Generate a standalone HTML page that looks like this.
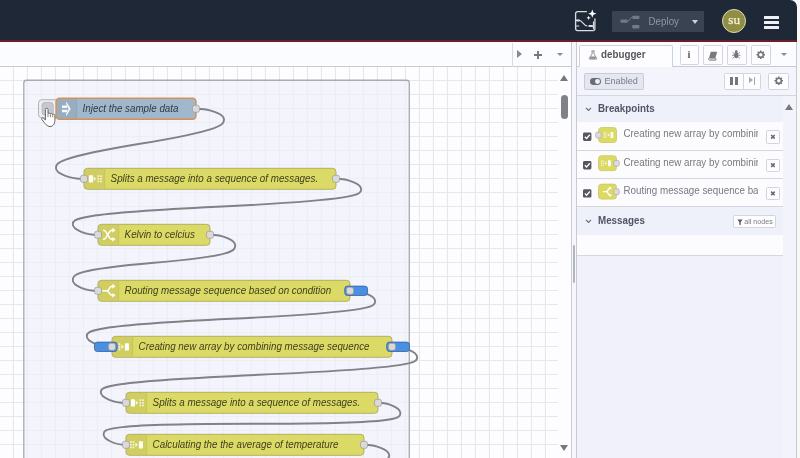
<!DOCTYPE html>
<html lang="en">
<head>
<meta charset="utf-8">
<title>Node-RED debugger</title>
<style>
*{box-sizing:border-box;margin:0;padding:0}
html,body{width:800px;height:458px;overflow:hidden;background:#f8f8f8;font-family:"Liberation Sans",sans-serif;}
#app{will-change:transform;position:absolute;left:0;top:0;width:796.5px;height:458px;overflow:hidden;border-top-right-radius:7px;background:#fbfcff}
.a{position:absolute}
#hdr{left:0;top:0;width:797px;height:42px;background:#1f2836;border-bottom:2px solid #6e1c28}
#tabs{left:0;top:42px;width:571px;height:25px;background:#fbfcff;border-bottom:1px solid #c9cbd3}
#ws{left:0;top:67px;width:571px;height:391px;background:#fff;overflow:hidden}
#ws svg{position:absolute;left:0;top:0}
.nl{font-family:"Liberation Sans",sans-serif;font-style:italic;font-size:14px}
#sep{left:571px;top:42px;width:6px;height:416px;background:#f6f7fc;border-left:1px solid #c9cbd3;border-right:1px solid #c9cbd3}
#sb{left:577px;top:42px;width:219.5px;height:416px;background:#f0f1fa;border-right:1px solid #c9cbd3}
.btn{position:absolute;background:#fdfdff;border:1px solid #d3d5dd;border-radius:1.5px}
.row{position:absolute;left:577px;width:206px;background:#fcfcff;border-bottom:1px solid #d5d7e0}
.t{position:absolute;left:623.5px;width:134.5px;white-space:nowrap;overflow:hidden;font-size:9.8px;color:#77797f;line-height:14px;transform:scaleY(1.09);transform-origin:0 75%}
.sec{position:absolute;left:577px;width:206px;background:#eef0fa}
.st{position:absolute;left:598px;font-weight:bold;font-size:9.8px;color:#4f5563;line-height:14px;transform:scaleY(1.09);transform-origin:0 75%}
</style>
</head>
<body>
<div id="app">
  <div id="hdr" class="a"></div>
  <!-- assistant icon -->
  <svg class="a" style="left:573px;top:7px" width="28" height="28" viewBox="0 0 28 28">
    <path d="M13.5 4.6H4.6a2 2 0 0 0-2 2v15a2 2 0 0 0 2 2h15.300a2 2 0 0 0 2-2v-9.600" fill="none" stroke="#d9dce3" stroke-width="1.300" stroke-linecap="round"/>
    <path d="M3 13.300h3.200c3.300 0 4 5.600 8 5.600M3 19h3.200" fill="none" stroke="#d9dce3" stroke-width="1.200"/>
    <rect x="3.200" y="12.400" width="3.600" height="2" rx=".6" fill="#d9dce3"/>
    <rect x="15.500" y="18" width="4.500" height="2" rx=".6" fill="#d9dce3"/>
    <path d="M20.500 14.500v7.500" stroke="#d9dce3" stroke-width="1.200"/>
    <path d="M19.300 2.600l1.100 3 3 1.100-3 1.100-1.100 3-1.100-3-3-1.100 3-1.100z" fill="#fff"/>
    <path d="M15.600 8.700l.6 1.500 1.500.6-1.500.6-.6 1.500-.6-1.500-1.500-.6 1.500-.6z" fill="#fff"/>
  </svg>
  <!-- deploy -->
  <div class="a" style="left:612px;top:11px;width:92px;height:21px;background:#3a4352;border-radius:1px"></div>
  <svg class="a" style="left:619px;top:13px" width="24" height="17" viewBox="0 0 24 17">
    <rect x="1.500" y="6.400" width="7.200" height="3.400" rx=".8" fill="#737a87"/>
    <rect x="13.200" y="2.700" width="7.200" height="3.400" rx=".8" fill="#737a87"/>
    <rect x="13.200" y="12" width="7.200" height="3.400" rx=".8" fill="#737a87"/>
    <path d="M8.700 8.100c2.500 0 2-3.700 4.500-3.700" stroke="#737a87" stroke-width="1" fill="none"/>
  </svg>
  <div class="a" style="left:648.5px;top:14.700px;font-size:9.8px;line-height:14px;color:#9096a1;transform:scaleY(1.08);transform-origin:0 75%">Deploy</div>
  <div class="a" style="left:692px;top:19.500px;width:0;height:0;border-left:3.300px solid transparent;border-right:3.300px solid transparent;border-top:4px solid #d0d3da"></div>
  <!-- user -->
  <div class="a" style="left:722.2px;top:9px;width:24px;height:24px;border-radius:50%;background:#908d45;border:1.500px solid #dedcb0;color:#fff;font-family:'Liberation Serif',serif;font-size:13.2px;line-height:19.5px;text-align:center;-webkit-text-stroke:.25px #f6f4d6;color:#f6f4d6">su</div>
  <!-- menu -->
  <div class="a" style="left:763.7px;top:15.7px;width:15.800px;height:3.100px;background:#eef0f5;border-radius:.5px"></div>
  <div class="a" style="left:763.7px;top:21px;width:15.800px;height:3.100px;background:#eef0f5;border-radius:.5px"></div>
  <div class="a" style="left:763.7px;top:26.200px;width:15.800px;height:3.100px;background:#eef0f5;border-radius:.5px"></div>

  <div id="tabs" class="a"></div>
  <div class="a" style="left:512px;top:43px;width:1px;height:24px;background:#d9dbe2"></div>
  <div class="a" style="left:516.500px;top:50px;width:0;height:0;border-top:4.200px solid transparent;border-bottom:4.200px solid transparent;border-left:5px solid #888a90"></div>
  <svg class="a" style="left:532.500px;top:49.500px" width="10" height="10" viewBox="0 0 10 10"><path d="M5 1v8M1 5h8" stroke="#777" stroke-width="1.900"/></svg>
  <div class="a" style="left:556.500px;top:53.200px;width:0;height:0;border-left:3.200px solid transparent;border-right:3.200px solid transparent;border-top:3.600px solid #888a90"></div>

  <div id="ws" class="a">
    <svg width="571" height="391" viewBox="0 0 571 391">
      <defs>
        <pattern id="grid" width="14" height="14" patternUnits="userSpaceOnUse">
          <path d="M13.500 0V14M0 13.500H14" stroke="#e7e7eb" stroke-width="1.2" fill="none"/>
        </pattern>
      </defs>
      <rect x="0" y="0" width="571" height="391" fill="#fdfdff"/>
      <rect x="0" y="0" width="558" height="391" fill="url(#grid)"/>
      <g transform="translate(0,-0.200) scale(0.7)">
        <rect x="34" y="19.200" width="550.700" height="640" rx="4" fill="#efeffb" fill-opacity="0.7" stroke="#a9abb1" stroke-width="1.900"/>
        <path d="M 280 60 C 300.0 60 320.0 67.5 320.0 75.0 S 320.0 90.0 200 110 S 80.0 137.5 80.0 145.0 S 100.0 160 120 160" fill="none" stroke="#808288" stroke-width="2.700" stroke-linecap="round"/>
<path d="M 480 160 C 498.0 160 516.0 167.5 516.0 175.0 S 516.0 190.0 310 200 S 104.0 217.5 104.0 225.0 S 122.0 240 140 240" fill="none" stroke="#808288" stroke-width="2.700" stroke-linecap="round"/>
<path d="M 300 240 C 318.0 240 336.0 247.5 336.0 255.0 S 336.0 270.0 220 280 S 104.0 297.5 104.0 305.0 S 122.0 320 140 320" fill="none" stroke="#808288" stroke-width="2.700" stroke-linecap="round"/>
<path d="M 500 320 C 518.0 320 536.0 327.5 536.0 335.0 S 536.0 350.0 330 360 S 124.0 377.5 124.0 385.0 S 142.0 400 160 400" fill="none" stroke="#808288" stroke-width="2.700" stroke-linecap="round"/>
<path d="M 560 400 C 578.0 400 596.0 407.5 596.0 415.0 S 596.0 430.0 370 440 S 144.0 457.5 144.0 465.0 S 162.0 480 180 480" fill="none" stroke="#808288" stroke-width="2.700" stroke-linecap="round"/>
<path d="M 540 480 C 556.0 480 572.0 487.5 572.0 495.0 S 572.0 510 360 510 S 148.0 517.5 148.0 525.0 S 164.0 540 180 540" fill="none" stroke="#808288" stroke-width="2.700" stroke-linecap="round"/>
<path d="M 520 540 C 538.0 540 556.0 547.5 556.0 555.0 S 556.0 570.0 360 580 S 164.0 597.5 164.0 605.0 S 182.0 620 200 620" fill="none" stroke="#808288" stroke-width="2.700" stroke-linecap="round"/>

        <g transform="translate(80,45)"><rect x="-25" y="2" width="32" height="26" rx="5" fill="#eee" stroke="#999" stroke-width="1"/><rect x="-20" y="6" width="16" height="18" rx="4" fill="#c4c8d4" stroke="#a8acb8" stroke-width="1"/><rect x="0" y="0" width="200" height="30" rx="5" fill="#a0b8cc" stroke="#d98f52" stroke-width="2"/><path d="M5 1h24v28H5a4 4 0 0 1-4-4V5a4 4 0 0 1 4-4z" fill="#000" fill-opacity="0.05"/><path d="M29.500 1v28" stroke="#000" stroke-opacity="0.12" stroke-width="1"/><path d="M8.500 10.400h7.500v3.400h-7.500zM8.500 16.400h7.500v3.400h-7.500z" fill="#fff" opacity=".92"/><path d="M14.500 4.500L21 15.100 14.500 25.700V22.300L18 15.100 14.500 7.900z" fill="#fff" opacity=".95"/><text transform="translate(38,19.800) scale(1,1.09)" fill="#2f3946" class="nl">Inject the sample data</text><rect x="195" y="10" width="10" height="10" rx="3" fill="#d9d9d9" stroke="#999" stroke-width="1"/></g>
<g transform="translate(120,145)"><rect x="0" y="0" width="360" height="30" rx="5" fill="#dcda66" stroke="#a7a556" stroke-width="1.2"/><path d="M5 1h24v28H5a4 4 0 0 1-4-4V5a4 4 0 0 1 4-4z" fill="#000" fill-opacity="0.05"/><path d="M29.500 1v28" stroke="#000" stroke-opacity="0.12" stroke-width="1"/><rect x="7" y="9.800" width="5.800" height="10.400" rx=".8" fill="#fff" opacity=".95"/><path d="M13.800 11.800l3.600 3.200-3.600 3.200z" fill="#fff" opacity=".85"/><g fill="#fff" opacity=".8"><rect x="19.200" y="10" width="2.400" height="2.400"/><rect x="19.200" y="13.800" width="2.400" height="2.400"/><rect x="19.200" y="17.600" width="2.400" height="2.400"/><rect x="23" y="10" width="2.400" height="2.400"/><rect x="23" y="13.800" width="2.400" height="2.400"/><rect x="23" y="17.600" width="2.400" height="2.400"/></g><text transform="translate(38,19.800) scale(1,1.09)" fill="#3f3f1e" class="nl">Splits a message into a sequence of messages.</text><rect x="-5" y="10" width="10" height="10" rx="3" fill="#d9d9d9" stroke="#999" stroke-width="1"/><rect x="355" y="10" width="10" height="10" rx="3" fill="#d9d9d9" stroke="#999" stroke-width="1"/></g>
<g transform="translate(140,225)"><rect x="0" y="0" width="160" height="30" rx="5" fill="#dcda66" stroke="#a7a556" stroke-width="1.2"/><path d="M5 1h24v28H5a4 4 0 0 1-4-4V5a4 4 0 0 1 4-4z" fill="#000" fill-opacity="0.05"/><path d="M29.500 1v28" stroke="#000" stroke-opacity="0.12" stroke-width="1"/><g fill="none" stroke="#fff" stroke-width="2.2" stroke-linecap="round" stroke-linejoin="round"><path d="M8 8.5c5 0 6.500 13 12 13h2"/><path d="M8 21.500c5 0 6.500-13 12-13h2"/></g><path d="M20.500 5l4.500 3.500-4.500 3.500z M20.500 18l4.500 3.500-4.500 3.500z" fill="#fff"/><text transform="translate(38,19.800) scale(1,1.09)" fill="#3f3f1e" class="nl">Kelvin to celcius</text><rect x="-5" y="10" width="10" height="10" rx="3" fill="#d9d9d9" stroke="#999" stroke-width="1"/><rect x="155" y="10" width="10" height="10" rx="3" fill="#d9d9d9" stroke="#999" stroke-width="1"/></g>
<g transform="translate(140,305)"><rect x="0" y="0" width="360" height="30" rx="5" fill="#dcda66" stroke="#a7a556" stroke-width="1.2"/><path d="M5 1h24v28H5a4 4 0 0 1-4-4V5a4 4 0 0 1 4-4z" fill="#000" fill-opacity="0.05"/><path d="M29.500 1v28" stroke="#000" stroke-opacity="0.12" stroke-width="1"/><g fill="none" stroke="#fff" stroke-width="2.2" stroke-linecap="round" stroke-linejoin="round"><path d="M7 15h6"/><path d="M13 15c3 0 3-6.500 7-6.500h2"/><path d="M13 15c3 0 3 6.500 7 6.500h2"/></g><path d="M20.500 5l4.500 3.500-4.500 3.500z M20.500 18l4.500 3.500-4.500 3.500z" fill="#fff"/><text transform="translate(38,19.800) scale(1,1.09)" fill="#3f3f1e" class="nl">Routing message sequence based on condition</text><rect x="352.5" y="8.300" width="32.500" height="13.400" rx="4" fill="#4a8fe2" stroke="#3b659c" stroke-width="1.200"/><rect x="-5" y="10" width="10" height="10" rx="3" fill="#d9d9d9" stroke="#999" stroke-width="1"/><rect x="355" y="10" width="10" height="10" rx="3" fill="#d9d9d9" stroke="#999" stroke-width="1"/></g>
<g transform="translate(160,385)"><rect x="0" y="0" width="400" height="30" rx="5" fill="#dcda66" stroke="#a7a556" stroke-width="1.2"/><path d="M5 1h24v28H5a4 4 0 0 1-4-4V5a4 4 0 0 1 4-4z" fill="#000" fill-opacity="0.05"/><path d="M29.500 1v28" stroke="#000" stroke-opacity="0.12" stroke-width="1"/><g fill="#fff" opacity=".8"><rect x="5.600" y="10" width="2.400" height="2.400"/><rect x="5.600" y="13.800" width="2.400" height="2.400"/><rect x="5.600" y="17.600" width="2.400" height="2.400"/><rect x="9.400" y="10" width="2.400" height="2.400"/><rect x="9.400" y="13.800" width="2.400" height="2.400"/><rect x="9.400" y="17.600" width="2.400" height="2.400"/></g><path d="M13.400 11.800l3.600 3.200-3.600 3.200z" fill="#fff" opacity=".85"/><rect x="18.400" y="9.800" width="5.800" height="10.400" rx=".8" fill="#fff" opacity=".95"/><text transform="translate(38,19.800) scale(1,1.09)" fill="#3f3f1e" class="nl">Creating new array by combining message sequence</text><rect x="-25" y="8.300" width="32.500" height="13.400" rx="4" fill="#4a8fe2" stroke="#3b659c" stroke-width="1.200"/><rect x="392.5" y="8.300" width="32.500" height="13.400" rx="4" fill="#4a8fe2" stroke="#3b659c" stroke-width="1.200"/><rect x="-5" y="10" width="10" height="10" rx="3" fill="#d9d9d9" stroke="#999" stroke-width="1"/><rect x="395" y="10" width="10" height="10" rx="3" fill="#d9d9d9" stroke="#999" stroke-width="1"/></g>
<g transform="translate(180,465)"><rect x="0" y="0" width="360" height="30" rx="5" fill="#dcda66" stroke="#a7a556" stroke-width="1.2"/><path d="M5 1h24v28H5a4 4 0 0 1-4-4V5a4 4 0 0 1 4-4z" fill="#000" fill-opacity="0.05"/><path d="M29.500 1v28" stroke="#000" stroke-opacity="0.12" stroke-width="1"/><rect x="7" y="9.800" width="5.800" height="10.400" rx=".8" fill="#fff" opacity=".95"/><path d="M13.800 11.800l3.600 3.200-3.600 3.200z" fill="#fff" opacity=".85"/><g fill="#fff" opacity=".8"><rect x="19.200" y="10" width="2.400" height="2.400"/><rect x="19.200" y="13.800" width="2.400" height="2.400"/><rect x="19.200" y="17.600" width="2.400" height="2.400"/><rect x="23" y="10" width="2.400" height="2.400"/><rect x="23" y="13.800" width="2.400" height="2.400"/><rect x="23" y="17.600" width="2.400" height="2.400"/></g><text transform="translate(38,19.800) scale(1,1.09)" fill="#3f3f1e" class="nl">Splits a message into a sequence of messages.</text><rect x="-5" y="10" width="10" height="10" rx="3" fill="#d9d9d9" stroke="#999" stroke-width="1"/><rect x="355" y="10" width="10" height="10" rx="3" fill="#d9d9d9" stroke="#999" stroke-width="1"/></g>
<g transform="translate(180,525)"><rect x="0" y="0" width="340" height="30" rx="5" fill="#dcda66" stroke="#a7a556" stroke-width="1.2"/><path d="M5 1h24v28H5a4 4 0 0 1-4-4V5a4 4 0 0 1 4-4z" fill="#000" fill-opacity="0.05"/><path d="M29.500 1v28" stroke="#000" stroke-opacity="0.12" stroke-width="1"/><g fill="#fff" opacity=".8"><rect x="5.600" y="10" width="2.400" height="2.400"/><rect x="5.600" y="13.800" width="2.400" height="2.400"/><rect x="5.600" y="17.600" width="2.400" height="2.400"/><rect x="9.400" y="10" width="2.400" height="2.400"/><rect x="9.400" y="13.800" width="2.400" height="2.400"/><rect x="9.400" y="17.600" width="2.400" height="2.400"/></g><path d="M13.400 11.800l3.600 3.200-3.600 3.200z" fill="#fff" opacity=".85"/><rect x="18.400" y="9.800" width="5.800" height="10.400" rx=".8" fill="#fff" opacity=".95"/><text transform="translate(38,19.800) scale(1,1.09)" fill="#3f3f1e" class="nl">Calculating the the average of temperature</text><rect x="-5" y="10" width="10" height="10" rx="3" fill="#d9d9d9" stroke="#999" stroke-width="1"/><rect x="335" y="10" width="10" height="10" rx="3" fill="#d9d9d9" stroke="#999" stroke-width="1"/></g>
      </g>
      <!-- hand cursor -->
      <g transform="translate(41,40.700)">
        <path d="M4.400 1.600C4.400 .2 7 .2 7 1.600V5.800C7.600 5.200 9 5.300 9.400 6.200 10 5.600 11.400 5.800 11.700 6.700 12.400 6.200 13.900 6.600 13.900 7.800V12.500C13.900 16.500 11.800 18.800 9 18.800 6.200 18.800 4.500 16.500 .8 11.600 .2 10.600 1.300 9.600 2.300 10.400L4.400 12.300Z" fill="#fff" stroke="#555" stroke-width=".9" stroke-linejoin="round"/>
        <path d="M7 6v3.500M9.400 6.500v3M11.700 7v2.500" stroke="#555" stroke-width=".7"/>
      </g>
    </svg>
    <!-- scrollbar -->
    <div class="a" style="left:560.200px;top:7.500px;width:0;height:0;border-left:4.400px solid transparent;border-right:4.400px solid transparent;border-bottom:6px solid #76787c"></div>
    <div class="a" style="left:561.200px;top:28px;width:7px;height:24px;border-radius:3.500px;background:#808287"></div>
    <div class="a" style="left:560.200px;top:378px;width:0;height:0;border-left:4.400px solid transparent;border-right:4.400px solid transparent;border-top:6px solid #76787c"></div>
  </div>

  <div id="sep" class="a"><div class="a" style="left:0.500px;top:203px;width:2px;height:38px;background:#b4b6be;border-radius:1px"></div></div>

  <div id="sb" class="a"></div>
  <!-- tab strip -->
  <div class="a" style="left:577px;top:42px;width:219px;height:25px;background:#fbfcff;border-bottom:1px solid #c9cbd3"></div>
  <div class="a" style="left:578.700px;top:45px;width:94px;height:22px;background:#fdfdff;border:1px solid #d0d2da;border-bottom:none;border-radius:2px 2px 0 0"></div>
  <svg class="a" style="left:587.500px;top:49.500px" width="10" height="10" viewBox="0 0 10 11" preserveAspectRatio="none"><path d="M3.600 1h2.800M4.100 1v3.200L1.300 9.200c-.2.500 0 .8.500.8h6.400c.5 0 .7-.3.500-.8L5.900 4.200V1" fill="none" stroke="#8a8c92" stroke-width="1"/><path d="M2.800 7.200h4.400l1 2.300H1.800z" fill="#8a8c92"/></svg>
  <div class="a" style="left:601px;top:48.400px;font-size:9.8px;font-weight:bold;color:#54565c;line-height:14px;transform:scaleY(1.08);transform-origin:0 75%">debugger</div>
  <div class="btn" style="left:679.500px;top:45.300px;width:19.500px;height:19.300px"></div>
  <div class="btn" style="left:703px;top:45.300px;width:19.500px;height:19.300px"></div>
  <div class="btn" style="left:726.500px;top:45.300px;width:20px;height:19.300px"></div>
  <div class="btn" style="left:750.500px;top:45.300px;width:20px;height:19.300px"></div>
  <div class="a" style="left:684px;top:47.500px;width:10px;text-align:center;font-family:'Liberation Serif',serif;font-weight:bold;font-size:10.5px;line-height:14px;color:#5a5c62">i</div>
  <svg class="a" style="left:707px;top:49.500px" width="12" height="12" viewBox="0 0 12 12"><path d="M3.800 1.800h6.400l-1.800 6.200H2z" fill="#77797f"/><path d="M2 8c-.7.600-.5 2.200.7 2.200h6l.5-1.400H3.200c-.5 0-.5-.8 0-.8" fill="none" stroke="#85878d" stroke-width="1"/></svg>
  <svg class="a" style="left:731.300px;top:49px" width="10.500" height="10.500" viewBox="0 0 12 12"><ellipse cx="6" cy="7.200" rx="2.500" ry="3.400" fill="#74767c"/><circle cx="6" cy="3" r="1.600" fill="#74767c"/><path d="M3.600 5.200L1.700 3.800M8.400 5.200l1.900-1.400M3.500 7.200H1.200M8.500 7.200h2.300M3.700 9.200l-1.900 1.500M8.300 9.200l1.900 1.500" stroke="#74767c" stroke-width=".9"/></svg>
  <svg class="a" style="left:755.700px;top:50.200px" width="9.600" height="9.600" viewBox="0 0 12 12"><circle cx="6" cy="6" r="3.200" fill="none" stroke="#74767c" stroke-width="2"/><g stroke="#74767c" stroke-width="1.900"><path d="M6 .6v2M6 9.400v2M.6 6h2M9.400 6h2M2.200 2.200l1.400 1.400M8.400 8.400l1.400 1.400M2.200 9.800l1.400-1.400M8.400 3.600l1.400-1.400"/></g></svg>
  <div class="a" style="left:781px;top:53.200px;width:0;height:0;border-left:3.200px solid transparent;border-right:3.200px solid transparent;border-top:3.600px solid #888a90"></div>

  <!-- toolbar -->
  <div class="a" style="left:577px;top:67px;width:219px;height:28.500px;background:#f4f5fc;border-bottom:1px solid #d5d7e0"></div>
  <div class="a" style="left:584px;top:73px;width:59.500px;height:16.500px;background:#e4e6f1;border:1px solid #c9cbd3;border-radius:1.5px"></div>
  <div class="a" style="left:590px;top:78px;width:11px;height:6.800px;border-radius:3.400px;background:#6a6c74"></div>
  <div class="a" style="left:595.200px;top:79px;width:4.800px;height:4.800px;border-radius:50%;background:#eef0f6"></div>
  <div class="a" style="left:604.500px;top:74.200px;font-size:9.1px;line-height:14px;color:#7a7c84;transform:scaleY(1.08);transform-origin:0 75%">Enabled</div>
  <div class="btn" style="left:724px;top:72.800px;width:20px;height:16.800px;border-radius:1.5px 0 0 1.5px"></div>
  <div class="btn" style="left:743px;top:72.800px;width:18px;height:16.800px;border-radius:0 1.5px 1.5px 0"></div>
  <div class="a" style="left:730.200px;top:77.300px;width:3.300px;height:7.700px;background:#74767c"></div>
  <div class="a" style="left:735.100px;top:77.300px;width:3.300px;height:7.700px;background:#74767c"></div>
  <div class="a" style="left:749.300px;top:77.400px;width:0;height:0;border-top:3.800px solid transparent;border-bottom:3.800px solid transparent;border-left:4.600px solid #a6a8ae"></div>
  <div class="a" style="left:753.600px;top:77.300px;width:1.600px;height:7.700px;background:#a6a8ae"></div>
  <div class="btn" style="left:768.200px;top:72.800px;width:20.800px;height:16.800px"></div>
  <svg class="a" style="left:773.700px;top:76.400px" width="9.600" height="9.600" viewBox="0 0 12 12"><circle cx="6" cy="6" r="3.200" fill="none" stroke="#74767c" stroke-width="2"/><g stroke="#74767c" stroke-width="1.900"><path d="M6 .6v2M6 9.400v2M.6 6h2M9.400 6h2M2.200 2.200l1.400 1.400M8.400 8.400l1.400 1.400M2.200 9.800l1.400-1.400M8.400 3.600l1.400-1.400"/></g></svg>

  <!-- Breakpoints -->
  <div class="sec" style="top:95.500px;height:26px"></div>
  <svg class="a" style="left:584.500px;top:106.500px" width="7" height="5" viewBox="0 0 7 5"><path d="M1 .9l2.500 2.500L6 .9" fill="none" stroke="#6c6e74" stroke-width="1.250"/></svg>
  <div class="st" style="top:102.300px">Breakpoints</div>

  <div class="row" style="top:121.500px;height:29px"></div>
  <div class="row" style="top:150.500px;height:28.800px"></div>
  <div class="row" style="top:179.300px;height:28.200px"></div>
  <div class="t" style="top:127.200px">Creating new array by combining message sequence</div>
  <div class="t" style="top:155.800px">Creating new array by combining message sequence</div>
  <div class="t" style="top:183.800px">Routing message sequence based on condition</div>

  <svg class="a" style="left:577px;top:121px" width="206" height="87" viewBox="0 0 206 87">
    <g transform="translate(0,0)"><rect x="6" y="11.500" width="8.400" height="8.400" rx="1.400" fill="#55575c"/><path d="M7.800 15.700l1.800 1.800 3.200-3.700" fill="none" stroke="#fff" stroke-width="1.300"/></g>
    <g transform="translate(0,28.5)"><rect x="6" y="11.500" width="8.400" height="8.400" rx="1.400" fill="#55575c"/><path d="M7.800 15.700l1.800 1.800 3.200-3.700" fill="none" stroke="#fff" stroke-width="1.300"/></g>
    <g transform="translate(0,56.7)"><rect x="6" y="11.500" width="8.400" height="8.400" rx="1.400" fill="#55575c"/><path d="M7.800 15.700l1.800 1.800 3.200-3.700" fill="none" stroke="#fff" stroke-width="1.300"/></g>
    <rect x="21.500" y="6.5" width="18" height="15" rx="3" fill="#dcda66" stroke="#cbc85c" stroke-width=".8"/>
    <rect x="18.700" y="11.300" width="5.600" height="5.600" rx="1.500" fill="#dcdce0" stroke="#aaa" stroke-width=".7"/>
    <g fill="#fff" opacity=".9" transform="translate(0,0)"><rect x="33.500" y="11" width="2.800" height="6"/><path d="M30.800 12.200l1.800 1.800-1.800 1.800z"/><rect x="26.500" y="11.300" width="1.100" height="1.100"/><rect x="28.200" y="11.300" width="1.100" height="1.100"/><rect x="26.500" y="13.400" width="1.100" height="1.100"/><rect x="28.200" y="13.400" width="1.100" height="1.100"/><rect x="26.500" y="15.500" width="1.100" height="1.100"/><rect x="28.200" y="15.500" width="1.100" height="1.100"/></g>
    <rect x="21.500" y="34.7" width="18" height="15" rx="3" fill="#dcda66" stroke="#cbc85c" stroke-width=".8"/>
    <rect x="36.700" y="39.500" width="5.600" height="5.600" rx="1.500" fill="#dcdce0" stroke="#aaa" stroke-width=".7"/>
    <g fill="#fff" opacity=".9" transform="translate(-2.5,28.2)"><rect x="33.500" y="11" width="2.800" height="6"/><path d="M30.800 12.200l1.800 1.800-1.800 1.800z"/><rect x="26.500" y="11.300" width="1.100" height="1.100"/><rect x="28.200" y="11.300" width="1.100" height="1.100"/><rect x="26.500" y="13.400" width="1.100" height="1.100"/><rect x="28.200" y="13.400" width="1.100" height="1.100"/><rect x="26.500" y="15.500" width="1.100" height="1.100"/><rect x="28.200" y="15.500" width="1.100" height="1.100"/></g>
    <rect x="21.500" y="63.1" width="18" height="15" rx="3" fill="#dcda66" stroke="#cbc85c" stroke-width=".8"/>
    <rect x="36.700" y="67.900" width="5.600" height="5.600" rx="1.500" fill="#dcdce0" stroke="#aaa" stroke-width=".7"/>
    <g fill="none" stroke="#fff" stroke-width="1.300" stroke-linecap="round"><path d="M26.500 70.700h3"/><path d="M29.500 70.700c1.500 0 1.500-3.600 3.500-3.600"/><path d="M29.500 70.700c1.500 0 1.500 3.600 3.500 3.600"/></g>
    <path d="M32.500 65.300l2.200 1.800-2.200 1.800zM32.500 72.500l2.200 1.800-2.200 1.800z" fill="#fff"/>
  </svg>
  <!-- x buttons -->
  <div class="btn" style="left:766.300px;top:130.200px;width:13.800px;height:13.500px"></div>
  <div class="btn" style="left:766.300px;top:158.600px;width:13.800px;height:13.500px"></div>
  <div class="btn" style="left:766.300px;top:186.800px;width:13.800px;height:13.500px"></div>
  <svg class="a" style="left:766.300px;top:130.200px" width="14" height="71" viewBox="0 0 14 71"><g stroke="#66686e" stroke-width="1.500"><path d="M5.100 5l3.600 3.600M8.700 5l-3.600 3.600"/><path d="M5.100 33.400l3.600 3.600M8.700 33.400l-3.600 3.600"/><path d="M5.100 61.600l3.600 3.600M8.700 61.600l-3.600 3.600"/></g></svg>

  <!-- Messages -->
  <div class="sec" style="top:207.500px;height:27px"></div>
  <svg class="a" style="left:584.500px;top:218.500px" width="7" height="5" viewBox="0 0 7 5"><path d="M1 .9l2.500 2.500L6 .9" fill="none" stroke="#6c6e74" stroke-width="1.250"/></svg>
  <div class="st" style="top:214px">Messages</div>
  <div class="btn" style="left:732.600px;top:215.300px;width:43.500px;height:13px"></div>
  <svg class="a" style="left:736.500px;top:218.500px" width="6" height="7" viewBox="0 0 6 7"><path d="M.3.500h5.400L3.700 3v3.200L2.300 5.400V3z" fill="#55575c"/></svg>
  <div class="a" style="left:744.3px;top:214.800px;font-size:7.1px;line-height:14px;color:#7a7c82">all nodes</div>
  <div class="a" style="left:577px;top:234.500px;width:206px;height:21.500px;background:#fcfcff;border-bottom:1px solid #d5d7e0"></div>
  <!-- sidebar scrollbar -->
  <div class="a" style="left:783px;top:96px;width:12.500px;height:362px;background:#f3f4fb"></div>
  <div class="a" style="left:785px;top:104px;width:0;height:0;border-left:4.500px solid transparent;border-right:4.500px solid transparent;border-bottom:6px solid #76787c"></div>
</div>
</body>
</html>
